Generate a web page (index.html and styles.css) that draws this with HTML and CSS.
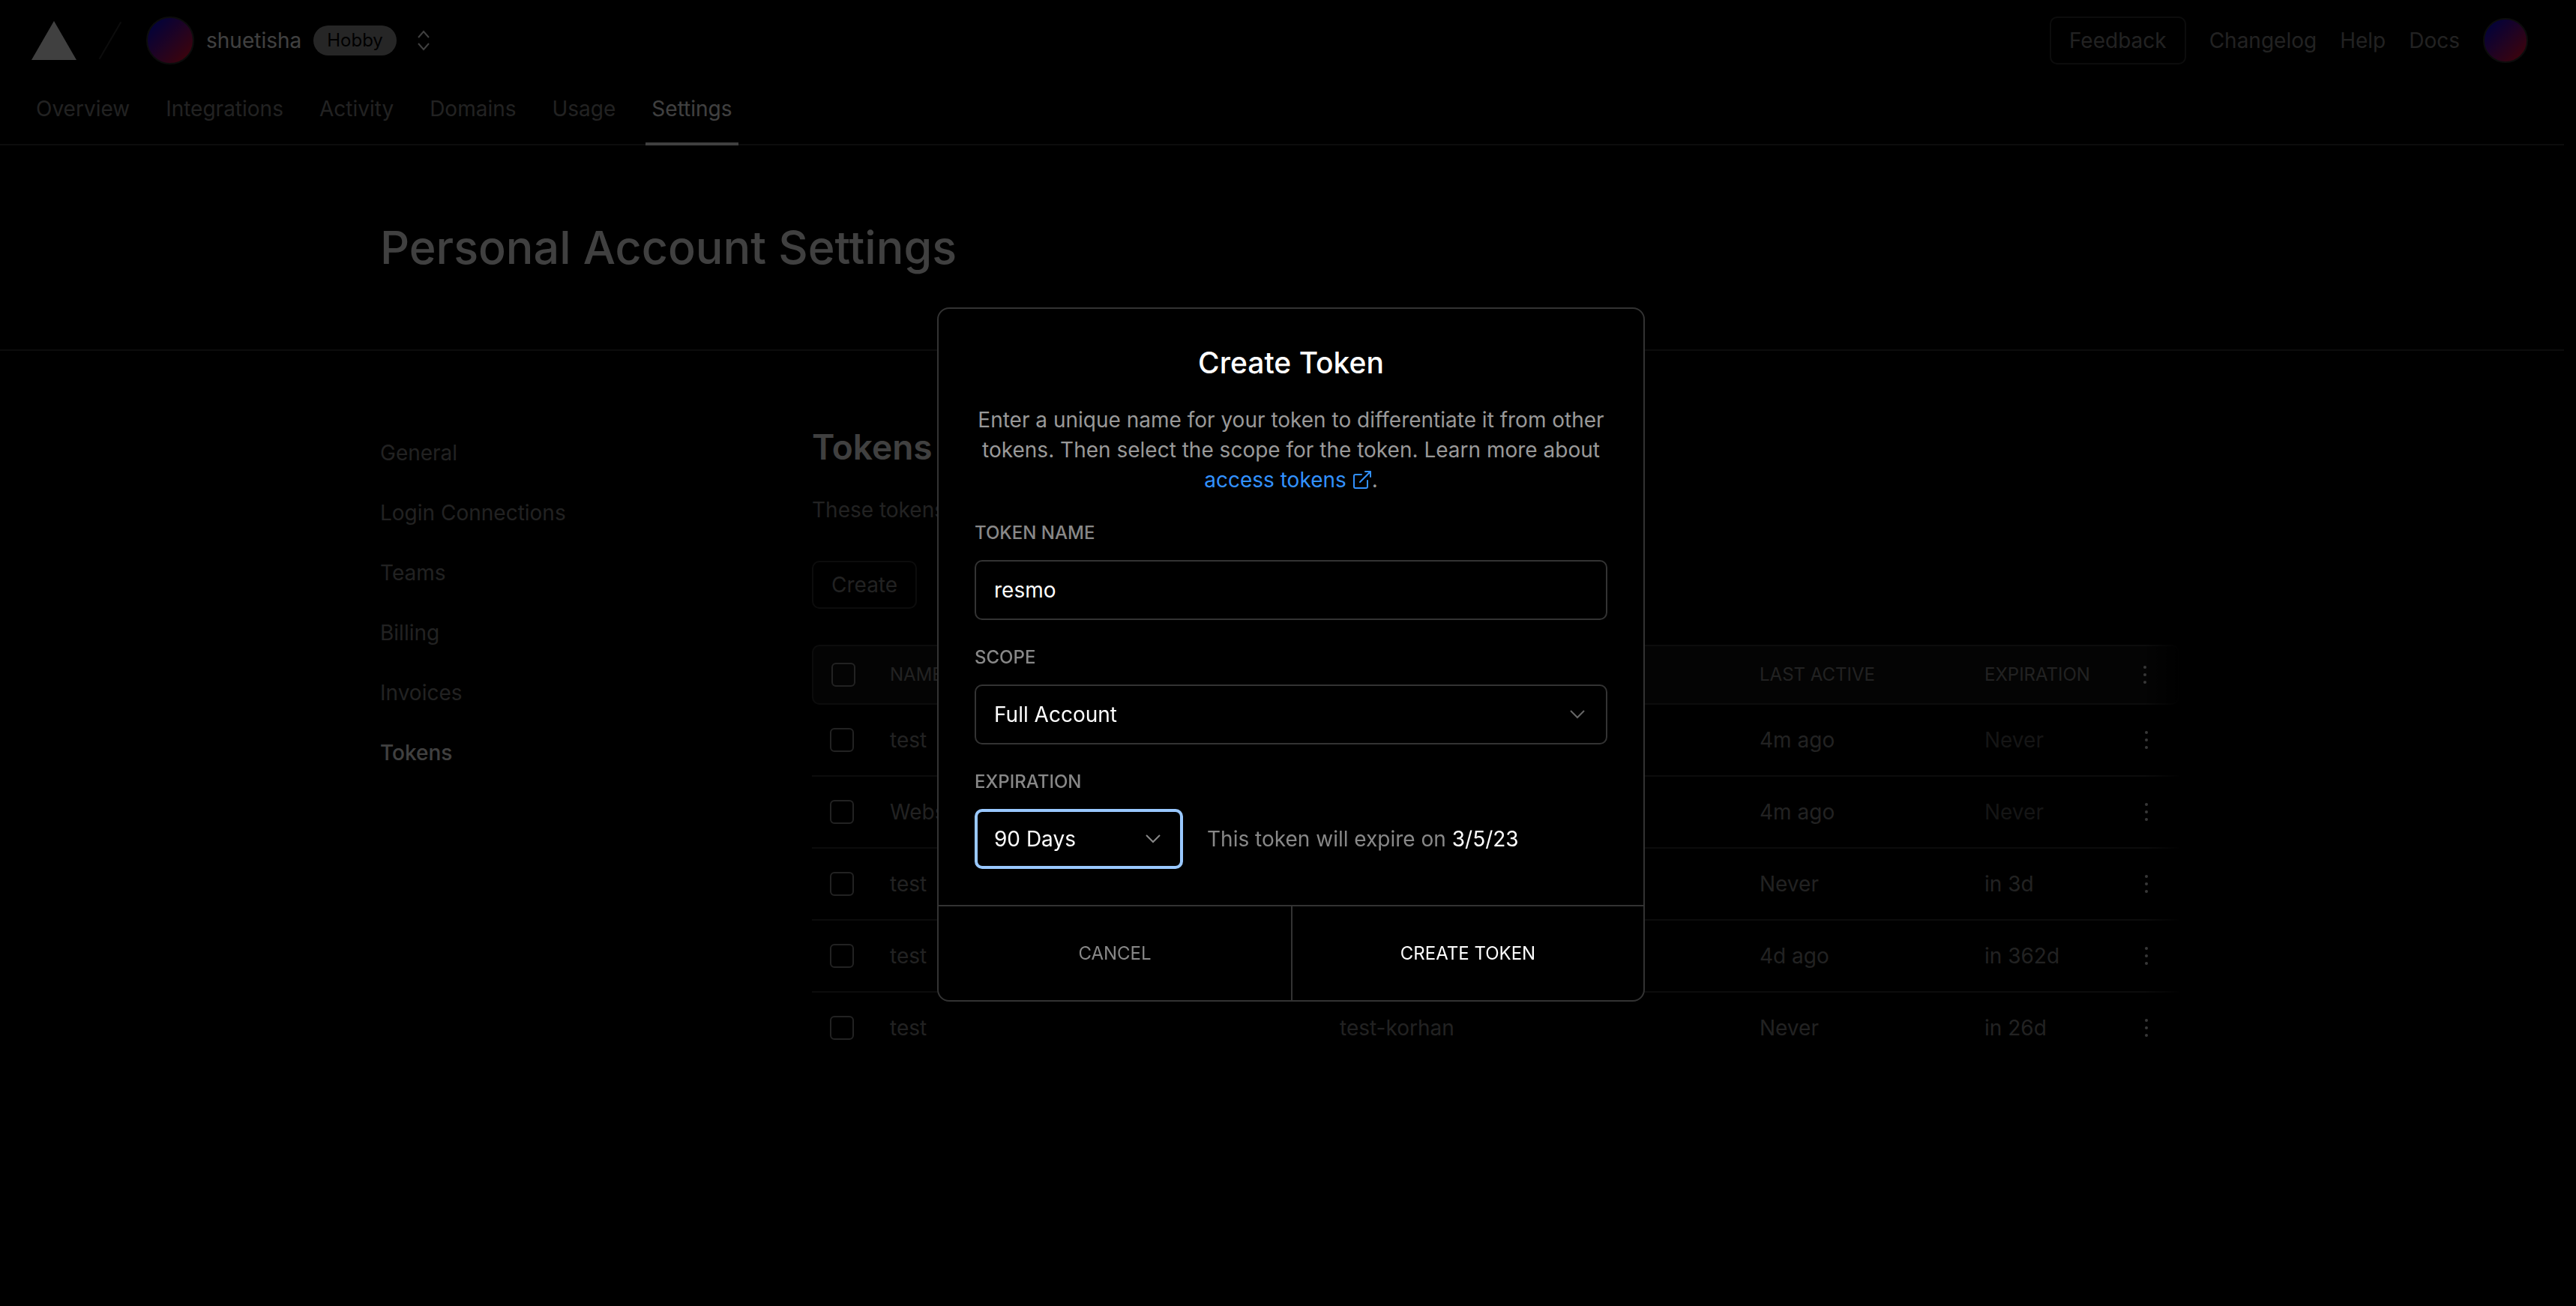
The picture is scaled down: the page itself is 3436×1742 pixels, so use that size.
FILE: index.html
```html
<!DOCTYPE html>
<html lang="en">
<head>
<meta charset="utf-8">
<title>Personal Account Settings</title>
<link rel="stylesheet" href="styles.css">
</head>
<body>
<div class="page">
  <header class="header">
    <div class="topbar">
      <a class="logo" href="#" aria-label="Home">
        <svg width="60" height="52" viewBox="0 0 60 52"><path d="M30 0L60 52H0Z" fill="#fff"/></svg>
      </a>
      <svg class="slash" width="32" height="52" viewBox="0 0 32 52" aria-hidden="true"><path d="M2 50L30 2" stroke="#333" stroke-width="2" stroke-linecap="round"/></svg>
      <span class="avatar avatar-large"></span>
      <span class="user">shuetisha</span>
      <span class="plan">Hobby</span>
      <button class="switcher" type="button" aria-label="Switch account">
        <svg width="16" height="28" viewBox="0 0 16 28" fill="none" stroke="#fff" stroke-width="2"><path d="M1 10L8 2L15 10M1 18L8 26L15 18"/></svg>
      </button>
      <div class="toplinks">
        <button class="button" type="button">Feedback</button>
        <a href="#">Changelog</a>
        <a href="#">Help</a>
        <a href="#">Docs</a>
        <span class="avatar"></span>
      </div>
    </div>
    <nav class="tabs">
      <a href="#">Overview</a>
      <a href="#">Integrations</a>
      <a href="#">Activity</a>
      <a href="#">Domains</a>
      <a href="#">Usage</a>
      <a class="active" href="#">Settings</a>
    </nav>
  </header>
  <div class="title-band">
    <h1 class="container">Personal Account Settings</h1>
  </div>
  <div class="container columns">
    <nav class="sidebar">
      <a href="#">General</a>
      <a href="#">Login Connections</a>
      <a href="#">Teams</a>
      <a href="#">Billing</a>
      <a href="#">Invoices</a>
      <a class="active" href="#">Tokens</a>
    </nav>
    <main class="content">
      <h2>Tokens</h2>
      <p>These tokens</p>
      <button class="button" type="button">Create</button>
      <div class="table-wrap">
        <table class="tokens">
          <colgroup><col class="c-check"><col class="c-name"><col class="c-scope"><col class="c-active"><col class="c-exp"><col></colgroup>
          <thead>
            <tr><th><input type="checkbox" aria-label="Select all"></th><th>NAME</th><th></th><th>LAST ACTIVE</th><th>EXPIRATION</th><th><button class="dots" type="button" aria-label="Actions"><i></i><i></i><i></i></button></th></tr>
          </thead>
          <tbody>
            <tr><td><input type="checkbox" aria-label="Select row"></td><td>test</td><td></td><td>4m ago</td><td class="dim">Never</td><td><button class="dots" type="button" aria-label="Actions"><i></i><i></i><i></i></button></td></tr>
            <tr><td><input type="checkbox" aria-label="Select row"></td><td>Website</td><td></td><td>4m ago</td><td class="dim">Never</td><td><button class="dots" type="button" aria-label="Actions"><i></i><i></i><i></i></button></td></tr>
            <tr><td><input type="checkbox" aria-label="Select row"></td><td>test</td><td></td><td>Never</td><td>in 3d</td><td><button class="dots" type="button" aria-label="Actions"><i></i><i></i><i></i></button></td></tr>
            <tr><td><input type="checkbox" aria-label="Select row"></td><td>test</td><td></td><td>4d ago</td><td>in 362d</td><td><button class="dots" type="button" aria-label="Actions"><i></i><i></i><i></i></button></td></tr>
            <tr><td><input type="checkbox" aria-label="Select row"></td><td>test</td><td>test-korhan</td><td>Never</td><td>in 26d</td><td><button class="dots" type="button" aria-label="Actions"><i></i><i></i><i></i></button></td></tr>
          </tbody>
        </table>
      </div>
    </main>
  </div>
</div>

<div class="backdrop">
  <form class="modal" role="dialog" aria-labelledby="modal-title">
    <div class="modal-body">
      <h3 id="modal-title">Create Token</h3>
      <p class="intro">Enter a unique name for your token to differentiate it from other tokens. Then select the scope for the token. Learn more about <a href="#">access tokens <svg width="26" height="26" viewBox="0 0 26 26" fill="none" stroke="currentColor" stroke-width="2" stroke-linecap="round" stroke-linejoin="round"><path d="M20 14v8a2 2 0 0 1-2 2H4a2 2 0 0 1-2-2V8a2 2 0 0 1 2-2h8M17 2h7v7M10 16L24 2"/></svg></a>.</p>
      <label for="token-name">TOKEN NAME</label>
      <input class="field" id="token-name" type="text" value="resmo">
      <label for="scope">SCOPE</label>
      <div class="select">
        <select class="field" id="scope"><option>Full Account</option></select>
        <svg width="20" height="12" viewBox="0 0 20 12" fill="none" stroke="#666" stroke-width="2"><path d="M1 1L10 10L19 1"/></svg>
      </div>
      <label for="expiration">EXPIRATION</label>
      <div class="expiry">
        <div class="select select-small">
          <select class="field focused" id="expiration"><option>90 Days</option></select>
          <svg width="20" height="12" viewBox="0 0 20 12" fill="none" stroke="#888" stroke-width="2"><path d="M1 1L10 10L19 1"/></svg>
        </div>
        <span>This token will expire on <b>3/5/23</b></span>
      </div>
    </div>
    <div class="modal-actions">
      <button type="button">CANCEL</button>
      <button class="primary" type="submit">CREATE TOKEN</button>
    </div>
  </form>
</div>
</body>
</html>
```
FILE: styles.css
```css
* { box-sizing: border-box; }

body {
  margin: 0;
  background: #000;
  color: #888;
  font: 28px/40px Inter, "Liberation Sans", sans-serif;
}

h1, h2, h3, p { margin: 0; }
a { color: inherit; text-decoration: none; }
button, input, select { font: inherit; color: inherit; }
button { background: none; border: 0; padding: 0; }

.page { margin-right: 16px; }

/* header */
.header { border-bottom: 2px solid #333; }
.topbar {
  display: flex;
  align-items: center;
  height: 108px;
  padding: 0 48px 0 42px;
}
.logo, .logo svg, .slash { display: block; }
.slash { margin: 0 32px 0 29px; }
.avatar {
  width: 60px;
  height: 60px;
  border: 2px solid #333;
  border-radius: 50%;
  background: linear-gradient(135deg, #0808e8 10%, #f01030 90%);
}
.avatar-large { width: 64px; height: 64px; }
.user { margin: 0 16px; color: #fff; }
.plan {
  height: 40px;
  padding: 0 18px;
  border-radius: 20px;
  background: #999;
  color: #000;
  font-size: 24px;
}
.switcher { margin-left: 28px; }
.switcher svg { display: block; }
.toplinks {
  display: flex;
  align-items: center;
  gap: 31px;
  margin-left: auto;
}
.button {
  height: 64px;
  padding: 0 24px;
  border: 2px solid #333;
  border-radius: 10px;
}
.tabs {
  display: flex;
  gap: 32px;
  padding: 0 40px;
}
.tabs a {
  height: 86px;
  margin-bottom: -2px;
  padding: 17px 8px 0;
}
.tabs .active { color: #fff; border-bottom: 4px solid #fff; }

/* content */
.container {
  width: 100%;
  max-width: 2406px;
  margin: 0 auto;
}
.title-band { padding: 96px 0; border-bottom: 2px solid #333; }
h1 { color: #fff; font-size: 61px; line-height: 80px; font-weight: 500; }
.columns {
  display: grid;
  grid-template-columns: 576px 1824px;
  padding-top: 96px;
}
.sidebar {
  display: flex;
  flex-direction: column;
  gap: 40px;
  padding-top: 20px;
}
.sidebar .active { color: #fff; font-weight: 500; }
h2 { color: #fff; font-size: 46px; line-height: 64px; font-weight: 600; }
.content p { margin: 32px 0 48px; }
.table-wrap { position: relative; isolation: isolate; margin-top: 48px; }
.table-wrap::after {
  content: "";
  position: absolute;
  inset: 0 0 0 auto;
  width: 48px;
  background: linear-gradient(90deg, transparent, rgba(0, 0, 0, .9));
}
.tokens {
  width: 100%;
  table-layout: fixed;
  border-collapse: separate;
  border-spacing: 0;
}
.c-check { width: 104px; }
.c-name { width: 600px; }
.c-scope { width: 560px; }
.c-active { width: 300px; }
.c-exp { width: 200px; }
.tokens th, .tokens td { padding: 0; text-align: left; }
.tokens th {
  height: 80px;
  border: solid #333;
  border-width: 2px 0;
  background: #111;
  font-size: 24px;
  font-weight: 400;
}
.tokens th:first-child { border-left-width: 2px; border-radius: 10px 0 0 10px; }
.tokens th:last-child { border-right-width: 2px; border-radius: 0 10px 10px 0; }
.tokens td { height: 96px; border-bottom: 2px solid #333; }
.tokens td:last-child { padding-left: 2px; }
.tokens tr:last-child td { border-bottom-color: transparent; }
.tokens .dim { color: #555; }
.tokens input {
  appearance: none;
  display: block;
  width: 32px;
  height: 32px;
  margin: 0 0 0 24px;
  border: 2px solid #888;
  border-radius: 6px;
}
.dots {
  position: relative;
  z-index: 1;
  display: flex;
  flex-direction: column;
  gap: 6px;
  padding: 0 12px;
}
.dots i { width: 4px; height: 4px; border-radius: 50%; background: #ddd; }

/* modal */
.backdrop {
  position: fixed;
  inset: 0;
  display: grid;
  place-items: center;
  padding: 4px 0 0 8px;
  background: rgba(0, 0, 0, .75);
}
.modal {
  width: 944px;
  border: 2px solid #333;
  border-radius: 16px;
  background: #000;
}
.modal-body {
  display: flex;
  flex-direction: column;
  padding: 48px;
}
h3 {
  color: #fff;
  font-size: 39px;
  line-height: 48px;
  font-weight: 500;
  text-align: center;
}
.intro { margin: 32px 0 33px; color: #999; text-align: center; }
.intro a { color: #3291ff; }
.intro svg { vertical-align: -3px; }
.modal label {
  margin-bottom: 18px;
  font-size: 24px;
  line-height: 36px;
  font-weight: 500;
}
.field {
  width: 100%;
  height: 80px;
  padding: 0 24px;
  border: 2px solid #333;
  border-radius: 10px;
  outline: 0;
  background: #000;
  color: #fff;
}
.field + label, .select + label { margin-top: 32px; }
.select { position: relative; display: flex; }
.select .field { appearance: none; }
.select svg { position: absolute; right: 30px; top: 34px; }
.select .focused { padding: 0 22px; border: 4px solid #99c8ff; }
.select-small { width: 278px; }
.expiry { display: flex; align-items: center; gap: 32px; }
.expiry b { color: #fff; font-weight: 400; }
.modal-actions {
  display: grid;
  grid-template-columns: 1fr 1fr;
  border-top: 2px solid #333;
}
.modal-actions button { height: 125px; font-size: 24px; }
.modal-actions .primary { border-left: 2px solid #333; color: #fff; }
```
